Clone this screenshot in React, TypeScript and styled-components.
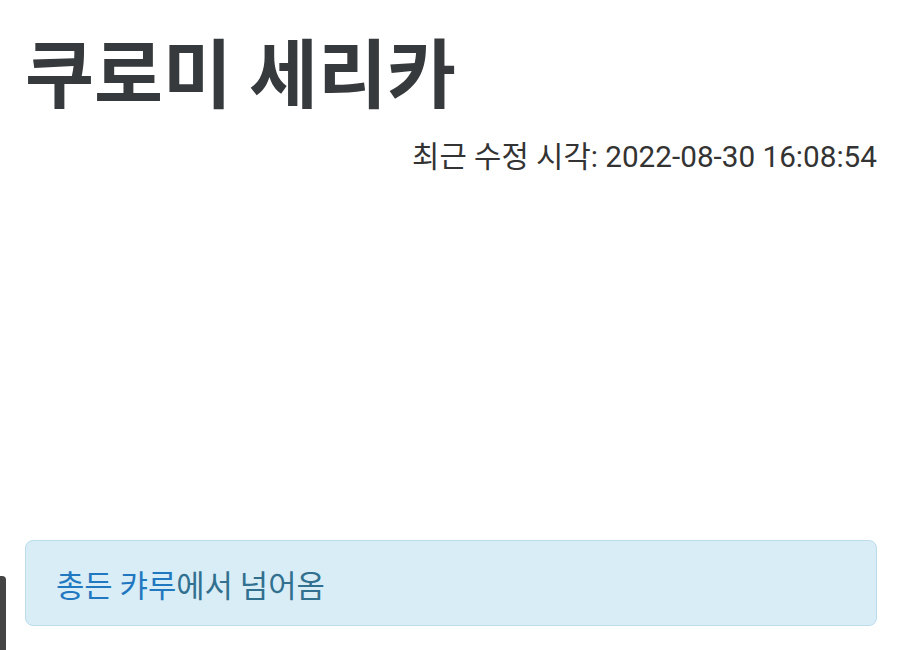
import React from "react";
import styled, { createGlobalStyle } from "styled-components";

const Global = createGlobalStyle`
  html, body { margin: 0; padding: 0; background: #ffffff; }
  body { font-family: Roboto, "Noto Sans CJK KR", sans-serif; }
`;

const Page = styled.div`
  position: relative;
  width: 900px;
  height: 650px;
  overflow: hidden;
  box-sizing: border-box;
  padding: 0 23px 0 25px;
  display: flex;
  flex-direction: column;
`;

const Title = styled.h1`
  margin: 20px 0 0 0;
  font-family: "Noto Sans CJK KR", sans-serif;
  font-weight: 700;
  font-size: 75px;
  line-height: 100px;
  color: #373a3c;
  letter-spacing: 0;
`;

const Meta = styled.div`
  margin-top: 18px;
  text-align: right;
  font-family: Roboto, "Noto Sans CJK KR", sans-serif;
  font-size: 29.7px;
  line-height: 38px;
  color: #333333;
`;

const Alert = styled.div`
  margin-top: auto;
  margin-bottom: 24px;
  height: 86px;
  box-sizing: border-box;
  display: flex;
  align-items: center;
  padding: 0 30px;
  background: #d9edf7;
  border: 1px solid #bcdcec;
  border-radius: 8px;
  font-family: "Noto Sans CJK KR", sans-serif;
  font-size: 30.8px;
  color: #31708f;
`;

const Link = styled.a`
  color: #1f78c0;
  text-decoration: none;
`;

const EdgeBar = styled.div`
  position: absolute;
  left: 0;
  top: 576px;
  width: 6px;
  height: 80px;
  background: #444444;
  border-top-right-radius: 4px;
`;

export default function App() {
  return (
    <>
      <Global />
      <Page>
        <Title>쿠로미 세리카</Title>
        <Meta>최근 수정 시각: 2022-08-30 16:08:54</Meta>
        <Alert>
          <span>
            <Link href="#">총든 캬루</Link>에서 넘어옴
          </span>
        </Alert>
        <EdgeBar />
      </Page>
    </>
  );
}
